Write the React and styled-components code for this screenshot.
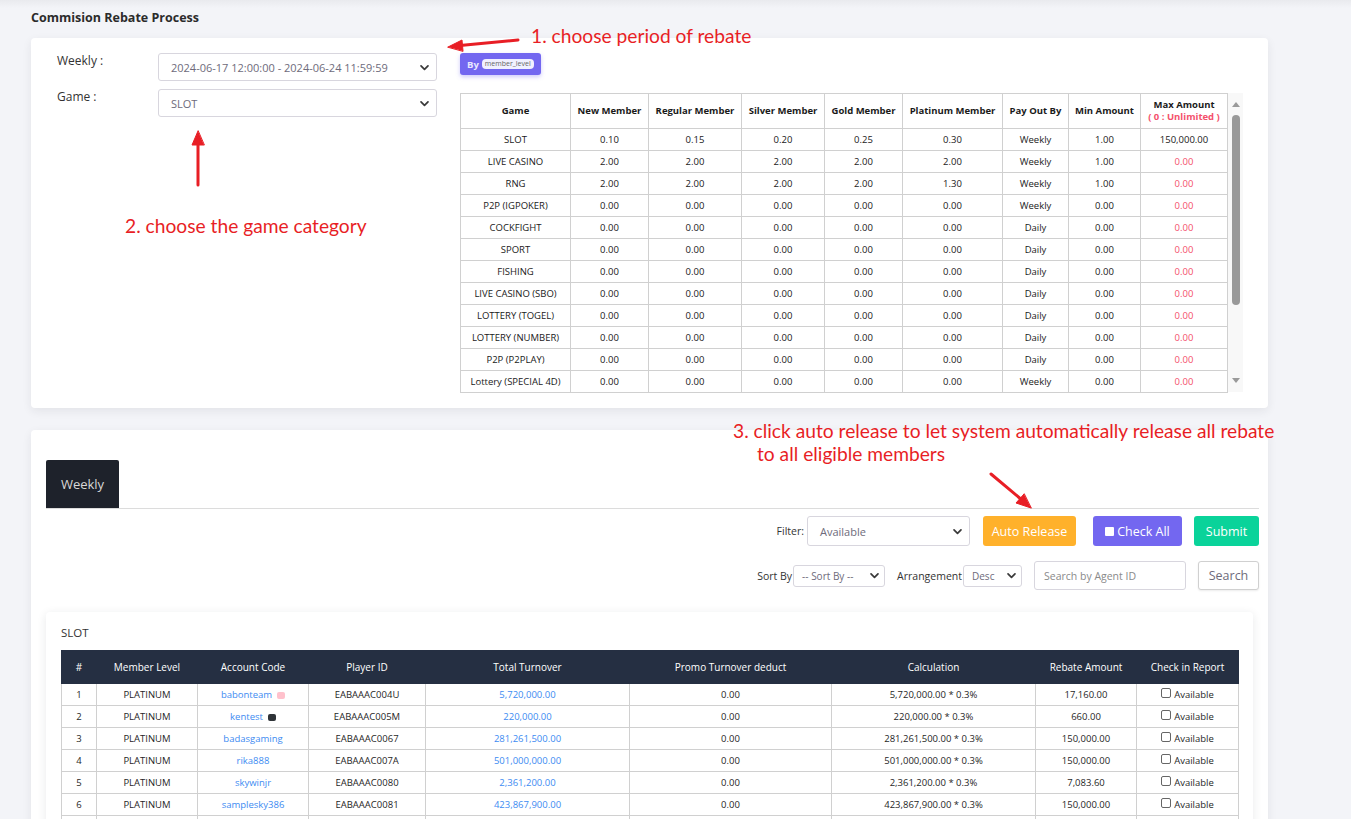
import React from "react";
import styled, { createGlobalStyle } from "styled-components";

const Global = createGlobalStyle`
  html, body { margin: 0; padding: 0; }
  body {
    background: #f3f4f8;
    font-family: "Open Sans", "Liberation Sans", sans-serif;
    color: #1f1f1f;
  }
  * { box-sizing: border-box; }
`;

const Page = styled.div`
  position: relative;
  min-height: 819px;
  padding: 9px 83px 40px 31px;
  background: linear-gradient(#e9eaee 0, #f3f4f8 8px, #f3f4f8 100%);
`;

const Title = styled.h1`
  margin: 0 0 12px 0;
  font-size: 12.5px;
  font-weight: 700;
  color: #2b2b2b;
  line-height: 17px;
`;

const Card = styled.section`
  background: #fff;
  border-radius: 4px;
  box-shadow: 0 3px 10px rgba(34, 41, 47, 0.08);
`;

const TopCard = styled(Card)`
  display: flex;
  align-items: flex-start;
  padding: 15px 26px 16px 26px;
  gap: 23px;
`;

const FormCol = styled.div`
  display: flex;
  flex-direction: column;
  gap: 8px;
`;

const FormRow = styled.div`
  display: grid;
  grid-template-columns: 101px 279px;
  align-items: start;
`;

const Label = styled.span`
  font-size: 12px;
  color: #333;
  margin-top: -1px;
`;

const SelectBox = styled.div`
  height: ${(p) => p.$h || 28}px;
  width: ${(p) => (p.$w ? p.$w + "px" : "auto")};
  border: 1px solid #d8d6de;
  border-radius: 3px;
  background: #fff;
  display: flex;
  align-items: center;
  justify-content: space-between;
  padding: 0 ${(p) => p.$pr || 6}px 0 ${(p) => p.$pl || 12}px;
  font-size: ${(p) => p.$fs || 11}px;
  color: #6e6b7b;
  white-space: nowrap;
`;

const Chevron = ({ size = 11 }) => (
  <svg width={size} height={size} viewBox="0 0 12 12" fill="none">
    <path d="M2.2 4.2 L6 8 L9.8 4.2" stroke="#3a3a3a" strokeWidth="1.9" strokeLinecap="round" strokeLinejoin="round" />
  </svg>
);

const RightCol = styled.div`
  display: flex;
  flex-direction: column;
  align-items: flex-start;
  gap: 18px;
`;

const Badge = styled.div`
  height: 22px;
  width: 81px;
  padding: 0 0 0 7px;
  background: #7367f0;
  border-radius: 3px;
  display: flex;
  align-items: center;
  gap: 3px;
  font-size: 9.5px;
  font-weight: 700;
  color: #e9e7ff;
  box-shadow: 0 2px 4px rgba(115, 103, 240, 0.35);
`;

const BadgeTag = styled.span`
  background: #f1f0ff;
  color: #666;
  border-radius: 4px;
  font-size: 7px;
  font-weight: 400;
  padding: 1px 3px;
  line-height: 8px;
`;

const TableWrap = styled.div`
  display: flex;
  height: 299px;
`;

const ScrollRail = styled.div`
  width: 15px;
  background: #f8f8f8;
  display: flex;
  flex-direction: column;
  align-items: center;
  padding: 9px 0 9px 1px;
`;

const RailArrow = styled.span`
  width: 0;
  height: 0;
  border-left: 4px solid transparent;
  border-right: 4px solid transparent;
  border-${(p) => (p.$down ? "top" : "bottom")}: 5px solid #9a9a9a;
`;

const RailThumb = styled.span`
  width: 8px;
  height: 190px;
  margin-top: 8px;
  margin-bottom: auto;
  border-radius: 4px;
  background: #999;
`;

const RateTable = styled.table`
  border-collapse: collapse;
  width: 767px;
  height: 299px;
  table-layout: fixed;
  font-size: 9.5px;
  color: #1a1a1a;
  & th, & td {
    border: 1px solid #d0d0d0;
    text-align: center;
    padding: 0 2px;
    white-space: nowrap;
  }
  & th {
    height: 35px;
    font-weight: 700;
    font-size: 9.5px;
    line-height: 12px;
  }
  & td { height: 22px; }
`;

const Red = styled.span`
  color: #f4516c;
  font-weight: ${(p) => (p.$bold ? 700 : 400)};
`;

const BottomCard = styled(Card)`
  margin-top: 22px;
  padding: 30px 9px 40px 15px;
`;

const TabBar = styled.div`
  display: flex;
  border-bottom: 1px solid #dcdcdc;
`;

const Tab = styled.div`
  width: 73px;
  height: 48px;
  background: #1e222b;
  color: #d8d8d8;
  border-radius: 2px 2px 0 0;
  display: flex;
  align-items: center;
  justify-content: center;
  font-size: 13px;
`;

const ToolRow = styled.div`
  display: flex;
  justify-content: flex-end;
  align-items: center;
  margin-top: ${(p) => p.$mt}px;
`;

const SmallLabel = styled.span`
  font-size: 10.5px;
  color: #333;
  margin-right: ${(p) => p.$mr || 2}px;
  margin-left: ${(p) => p.$ml || 0}px;
`;

const Btn = styled.button`
  height: ${(p) => p.$h || 30}px;
  width: ${(p) => p.$w}px;
  margin-left: ${(p) => p.$ml}px;
  border: ${(p) => (p.$outline ? "1px solid #d0d0d0" : "none")};
  border-radius: 3px;
  background: ${(p) => p.$bg};
  color: ${(p) => p.$color || "#fff"};
  font-family: inherit;
  font-size: 12.5px;
  padding: 0;
  display: flex;
  align-items: center;
  justify-content: center;
  gap: 3px;
  box-shadow: ${(p) => (p.$outline ? "0 1px 2px rgba(0,0,0,0.08)" : "none")};
`;

const Square = styled.span`
  width: 9px;
  height: 9px;
  background: #fff;
  border-radius: 1px;
  display: inline-block;
`;

const SearchInput = styled.div`
  width: 152px;
  height: 29px;
  margin-left: 12px;
  border: 1px solid #d8d6de;
  border-radius: 3px;
  font-size: 10.5px;
  color: #8a8a8a;
  display: flex;
  align-items: center;
  padding-left: 9px;
`;

const InnerCard = styled(Card)`
  margin-top: 22px;
  margin-right: 6px;
  padding: 14px 15px 20px 15px;
  box-shadow: 0 2px 10px rgba(34, 41, 47, 0.1);
`;

const Caption = styled.div`
  font-size: 11.5px;
  color: #333;
  line-height: 14px;
  margin-bottom: 10px;
`;

const DataTable = styled.table`
  border-collapse: collapse;
  width: 1177px;
  table-layout: fixed;
  font-size: 9.5px;
  color: #1f1f1f;
  & th {
    background: #252f42;
    color: #fff;
    font-weight: 500;
    font-size: 10px;
    height: 33px;
    border: 1px solid #252f42;
    white-space: nowrap;
  }
  & td {
    height: 22px;
    border: 1px solid #d0d0d0;
    text-align: center;
    white-space: nowrap;
  }
`;

const Link = styled.span`
  color: #3d8bf2;
`;

const Dot = styled.span`
  display: inline-block;
  width: 8px;
  height: 7px;
  border-radius: 2px;
  background: ${(p) => p.$c};
  margin-left: 5px;
  vertical-align: -1px;
`;

const CheckCell = styled.span`
  display: inline-flex;
  align-items: center;
  gap: 3px;
  font-size: 9.5px;
`;

const CheckBox = styled.span`
  width: 10px;
  height: 10px;
  border: 1px solid #666;
  border-radius: 2px;
  display: inline-block;
  background: #fff;
  margin-top: -3px;
`;

const Note = styled.div`
  position: absolute;
  left: ${(p) => p.$x}px;
  top: ${(p) => p.$y}px;
  color: #e81e25;
  font-family: Lato, "Open Sans", sans-serif;
  font-size: 19.2px;
  line-height: 23px;
  white-space: nowrap;
`;

const Arrows = styled.svg`
  position: absolute;
  left: 0;
  top: 0;
  pointer-events: none;
`;

const rates = [
  ["SLOT", "0.10", "0.15", "0.20", "0.25", "0.30", "Weekly", "1.00", "150,000.00"],
  ["LIVE CASINO", "2.00", "2.00", "2.00", "2.00", "2.00", "Weekly", "1.00", "0.00"],
  ["RNG", "2.00", "2.00", "2.00", "2.00", "1.30", "Weekly", "1.00", "0.00"],
  ["P2P (IGPOKER)", "0.00", "0.00", "0.00", "0.00", "0.00", "Weekly", "0.00", "0.00"],
  ["COCKFIGHT", "0.00", "0.00", "0.00", "0.00", "0.00", "Daily", "0.00", "0.00"],
  ["SPORT", "0.00", "0.00", "0.00", "0.00", "0.00", "Daily", "0.00", "0.00"],
  ["FISHING", "0.00", "0.00", "0.00", "0.00", "0.00", "Daily", "0.00", "0.00"],
  ["LIVE CASINO (SBO)", "0.00", "0.00", "0.00", "0.00", "0.00", "Daily", "0.00", "0.00"],
  ["LOTTERY (TOGEL)", "0.00", "0.00", "0.00", "0.00", "0.00", "Daily", "0.00", "0.00"],
  ["LOTTERY (NUMBER)", "0.00", "0.00", "0.00", "0.00", "0.00", "Daily", "0.00", "0.00"],
  ["P2P (P2PLAY)", "0.00", "0.00", "0.00", "0.00", "0.00", "Daily", "0.00", "0.00"],
  ["Lottery (SPECIAL 4D)", "0.00", "0.00", "0.00", "0.00", "0.00", "Weekly", "0.00", "0.00"],
];

const rateCols = [110, 78, 93, 83, 78, 100, 66, 72, 87];

const members = [
  ["1", "babonteam", "#ffc1cc", "EABAAAC004U", "5,720,000.00", "5,720,000.00 * 0.3%", "17,160.00"],
  ["2", "kentest", "#2f3338", "EABAAAC005M", "220,000.00", "220,000.00 * 0.3%", "660.00"],
  ["3", "badasgaming", null, "EABAAAC0067", "281,261,500.00", "281,261,500.00 * 0.3%", "150,000.00"],
  ["4", "rika888", null, "EABAAAC007A", "501,000,000.00", "501,000,000.00 * 0.3%", "150,000.00"],
  ["5", "skywinjr", null, "EABAAAC0080", "2,361,200.00", "2,361,200.00 * 0.3%", "7,083.60"],
  ["6", "samplesky386", null, "EABAAAC0081", "423,867,900.00", "423,867,900.00 * 0.3%", "150,000.00"],
  ["7", "luckystar77", null, "EABAAAC0082", "120,000.00", "120,000.00 * 0.3%", "360.00"],
];

const dataCols = [35, 101, 111, 117, 204, 202, 204, 101, 102];

export default function App() {
  return (
    <>
      <Global />
      <Page>
        <Title>Commision Rebate Process</Title>
        <TopCard>
          <FormCol>
            <FormRow>
              <Label>Weekly :</Label>
              <SelectBox>
                <span>2024-06-17 12:00:00 - 2024-06-24 11:59:59</span>
                <Chevron />
              </SelectBox>
            </FormRow>
            <FormRow>
              <Label>Game :</Label>
              <SelectBox>
                <span>SLOT</span>
                <Chevron />
              </SelectBox>
            </FormRow>
          </FormCol>
          <RightCol>
            <Badge>
              By <BadgeTag>member_level</BadgeTag>
            </Badge>
            <TableWrap>
              <RateTable>
                <colgroup>
                  {rateCols.map((w, i) => (
                    <col key={i} style={{ width: w }} />
                  ))}
                </colgroup>
                <thead>
                  <tr>
                    <th>Game</th>
                    <th>New Member</th>
                    <th>Regular Member</th>
                    <th>Silver Member</th>
                    <th>Gold Member</th>
                    <th>Platinum Member</th>
                    <th>Pay Out By</th>
                    <th>Min Amount</th>
                    <th>
                      Max Amount
                      <br />
                      <Red $bold>( 0 : Unlimited )</Red>
                    </th>
                  </tr>
                </thead>
                <tbody>
                  {rates.map((r) => (
                    <tr key={r[0]}>
                      {r.slice(0, 8).map((c, i) => (
                        <td key={i}>{c}</td>
                      ))}
                      <td>{r[8] === "0.00" ? <Red>{r[8]}</Red> : r[8]}</td>
                    </tr>
                  ))}
                </tbody>
              </RateTable>
              <ScrollRail>
                <RailArrow />
                <RailThumb />
                <RailArrow $down />
              </ScrollRail>
            </TableWrap>
          </RightCol>
        </TopCard>

        <BottomCard>
          <TabBar>
            <Tab>Weekly</Tab>
          </TabBar>
          <ToolRow $mt={7}>
            <SmallLabel $mr={3}>Filter:</SmallLabel>
            <SelectBox $w={163} $h={30} $fs={11}>
              <span>Available</span>
              <Chevron />
            </SelectBox>
            <Btn $w={93} $ml={13} $bg="#ffb12b">Auto Release</Btn>
            <Btn $w={89} $ml={17} $bg="#7367f0">
              <Square />
              Check All
            </Btn>
            <Btn $w={65} $ml={12} $bg="#0ad39a">Submit</Btn>
          </ToolRow>
          <ToolRow $mt={15}>
            <SmallLabel $mr={1}>Sort By</SmallLabel>
            <SelectBox $w={92} $h={22} $fs={10} $pl={8} $pr={4}>
              <span>-- Sort By --</span>
              <Chevron />
            </SelectBox>
            <SmallLabel $ml={12} $mr={1}>Arrangement</SmallLabel>
            <SelectBox $w={59} $h={22} $fs={10} $pl={8} $pr={4}>
              <span>Desc</span>
              <Chevron />
            </SelectBox>
            <SearchInput>Search by Agent ID</SearchInput>
            <Btn $w={61} $h={29} $ml={12} $bg="#fff" $color="#6e6b7b" $outline>
              Search
            </Btn>
          </ToolRow>
          <InnerCard>
            <Caption>SLOT</Caption>
            <DataTable>
              <colgroup>
                {dataCols.map((w, i) => (
                  <col key={i} style={{ width: w }} />
                ))}
              </colgroup>
              <thead>
                <tr>
                  <th>#</th>
                  <th>Member Level</th>
                  <th>Account Code</th>
                  <th>Player ID</th>
                  <th>Total Turnover</th>
                  <th>Promo Turnover deduct</th>
                  <th>Calculation</th>
                  <th>Rebate Amount</th>
                  <th>Check in Report</th>
                </tr>
              </thead>
              <tbody>
                {members.map((m) => (
                  <tr key={m[0]}>
                    <td>{m[0]}</td>
                    <td>PLATINUM</td>
                    <td>
                      <Link>{m[1]}</Link>
                      {m[2] && <Dot $c={m[2]} />}
                    </td>
                    <td>{m[3]}</td>
                    <td>
                      <Link>{m[4]}</Link>
                    </td>
                    <td>0.00</td>
                    <td>{m[5]}</td>
                    <td>{m[6]}</td>
                    <td>
                      <CheckCell>
                        <CheckBox />
                        Available
                      </CheckCell>
                    </td>
                  </tr>
                ))}
              </tbody>
            </DataTable>
          </InnerCard>
        </BottomCard>

        <Note $x={531} $y={24}>1. choose period of rebate</Note>
        <Note $x={125} $y={214}>2. choose the game category</Note>
        <Note $x={733} $y={419}>3. click auto release to let system automatically release all rebate</Note>
        <Note $x={757} $y={442}>to all eligible members</Note>
        <Arrows width="1351" height="819" viewBox="0 0 1351 819">
          <g fill="#e81e25" stroke="#e81e25" strokeWidth="3" strokeLinecap="round">
            <line x1="518" y1="40" x2="460" y2="45.5" />
            <polygon points="448,47 462,40 463,51" strokeWidth="1" />
            <line x1="198" y1="185" x2="198" y2="143" />
            <polygon points="198,131 192,145 204,145" strokeWidth="1" />
            <line x1="991" y1="474" x2="1022" y2="500" />
            <polygon points="1031,508 1016,503 1024,494" strokeWidth="1" />
          </g>
        </Arrows>
      </Page>
    </>
  );
}
